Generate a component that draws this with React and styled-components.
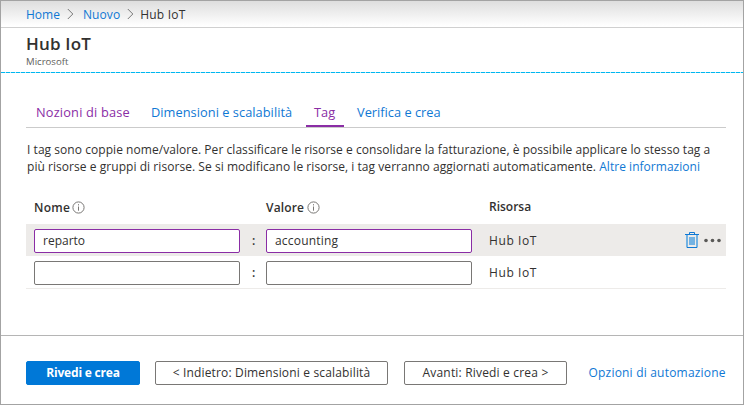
import React from 'react';
import styled, { createGlobalStyle, css } from 'styled-components';

const GlobalStyle = createGlobalStyle`
  *, *::before, *::after { box-sizing: border-box; }
  body { margin: 0; }
`;

const link = '#0f78d4';
const purple = '#8a2da5';
const ink = '#323130';

const Window = styled.div`
  display: flex;
  flex-direction: column;
  width: 744px;
  height: 405px;
  border: 1px solid #a3a3a3;
  background: #fff;
  color: ${ink};
  font: 400 12px/17px "Open Sans", "Noto Sans", sans-serif;
  white-space: nowrap;
`;

const Breadcrumb = styled.nav`
  display: flex;
  align-items: center;
  height: 27px;
  padding-left: 25px;
  border-bottom: 1px solid #d0d0d0;
  background: linear-gradient(#dedede, #fff 96%);
`;

const Crumb = styled.span`
  color: ${(p) => (p.$current ? ink : link)};
  letter-spacing: ${(p) => p.$track || 0}px;
`;

const Chevron = styled.svg`
  width: 7px;
  height: 12px;
  margin: 0 ${(p) => p.$after}px 0 7px;
  fill: none;
  stroke: #777;
  stroke-width: 1;
`;

const Header = styled.header`
  height: 44px;
  padding: 5px 0 0 25px;
`;

const DashLine = styled.div`
  height: 1px;
  background: linear-gradient(90deg, #00b7f0 0 4px, #b5eaf9 4px 5px) 0 0 / 5px 1px repeat-x;
`;

const Title = styled.h1`
  margin: 0;
  font-size: 17px;
  line-height: 22px;
  font-weight: 600;
  letter-spacing: 0.2px;
`;

const Publisher = styled.div`
  color: #605e5c;
  font-size: 9.6px;
  line-height: 14px;
`;

const Main = styled.main`
  height: 262px;
  padding: 27px 17px 0 25px;
`;

const Tabs = styled.div`
  display: flex;
  height: 28px;
  padding-left: 2px;
  border-bottom: 1px solid #cbcbcb;
`;

const Tab = styled.div`
  height: 27px;
  padding: 4px 0 0 8px;
  width: ${(p) => p.$width}px;
  margin-right: ${(p) => p.$gap}px;
  color: ${(p) => (p.$visited ? purple : link)};
  font-size: 12.8px;
  line-height: 17px;
  letter-spacing: ${(p) => p.$track || 0}px;
  ${(p) => p.$active && css`border-bottom: 2px solid ${purple};`}
`;

const Description = styled.p`
  margin: 13px 0 0 1px;
`;

const DescriptionLine = styled.span`
  display: block;
  letter-spacing: ${(p) => p.$track}px;
`;

const Link = styled.a`
  color: ${link};
  letter-spacing: 0.03px;
`;

const columns = css`
  display: grid;
  grid-template-columns: 206px 26px 206px 17px 1fr auto;
  padding-left: 8px;
`;

const TableHead = styled.div`
  ${columns}
  height: 49px;
  padding-top: 23px;
  font-weight: 600;
`;

const HeadCell = styled.div`
  display: flex;
  align-items: flex-start;
  grid-column: ${(p) => p.$column};
  padding-top: ${(p) => (p.$hinted ? 1 : 0)}px;
  letter-spacing: ${(p) => p.$track || 0}px;
`;

const InfoIcon = styled.svg`
  width: 13px;
  height: 13px;
  margin: 1.5px 0 0 ${(p) => p.$gap}px;
  fill: none;
  stroke: #797775;
`;

const TagRow = styled.div`
  ${columns}
  align-items: center;
  height: ${(p) => (p.$active ? 32 : 33)}px;
  background: ${(p) => (p.$active ? '#edebe9' : '#fff')};
  border-bottom: ${(p) => (p.$active ? '0' : '1px solid #edebe9')};
`;

const Field = styled.div`
  height: 24px;
  margin-top: 2px;
  padding-left: 8px;
  border: 1px solid ${(p) => (p.$filled ? purple : '#797775')};
  border-radius: 2px;
  background: #fff;
  line-height: 22px;
  letter-spacing: ${(p) => p.$track || 0}px;
`;

const Colon = styled.div`
  padding-left: 12px;
  font-weight: 600;
`;

const Resource = styled.div`
  grid-column: 5;
  letter-spacing: 0.6px;
`;

const Actions = styled.div`
  display: flex;
  align-items: center;
  gap: 5px;
  padding-right: 5px;
`;

const Trash = styled.svg`
  width: 14px;
  height: 17px;
`;

const More = styled.svg`
  width: 17px;
  height: 5px;
  fill: #5a5957;
`;

const Footer = styled.footer`
  display: flex;
  flex: 1;
  padding: 25px 0 0 25px;
  border-top: 1px solid #b5b5b5;
`;

const Button = styled.button`
  width: ${(p) => p.$width}px;
  height: 24px;
  margin-right: ${(p) => p.$gap}px;
  padding: 0;
  border: 1px solid #797775;
  border-radius: 2px;
  background: #fff;
  color: ${ink};
  font: 500 12px/22px "Open Sans", "Noto Sans", sans-serif;
  letter-spacing: ${(p) => p.$track || 0}px;
  white-space: nowrap;
  ${(p) => p.$primary && css`
    border-color: #0078d7;
    background: #0078d7;
    color: #fff;
    font-weight: 700;
  `}
`;

const FooterLink = styled.a`
  padding-top: 3px;
  color: ${link};
  letter-spacing: 0.2px;
`;

function Separator({ after }) {
  return (
    <Chevron $after={after} viewBox="0 0 7 12">
      <path d="M0.8 1 L5.8 6 L0.8 11" />
    </Chevron>
  );
}

function Info({ gap }) {
  return (
    <InfoIcon $gap={gap} viewBox="0 0 13 13">
      <circle cx="6.5" cy="6.5" r="5.6" />
      <path d="M6.5 5.5V9.7M6.5 3.2V4.4" />
    </InfoIcon>
  );
}

function TrashIcon() {
  return (
    <Trash viewBox="0 0 14 17">
      <path d="M2 3V15.5M12 3V15.5" stroke="#73b2e2" strokeWidth="2" />
      <rect x="4" y="5" width="6" height="8" fill="#73b2e2" />
      <path d="M0 2.5H14M2 15.5H12M4.5 2V0.5H9.5V2" fill="none" stroke="#0f78d4" />
    </Trash>
  );
}

export default function App() {
  return (
    <>
      <GlobalStyle />
      <Window>
        <Breadcrumb>
          <Crumb>Home</Crumb>
          <Separator after={9} />
          <Crumb $track={0.1}>Nuovo</Crumb>
          <Separator after={6} />
          <Crumb $current $track={0.2}>Hub IoT</Crumb>
        </Breadcrumb>
        <Header>
          <Title>Hub IoT</Title>
          <Publisher>Microsoft</Publisher>
        </Header>
        <DashLine />
        <Main>
          <Tabs>
            <Tab $visited $width={101} $gap={14} $track={0.17}>Nozioni di base</Tab>
            <Tab $width={148} $gap={15} $track={0.04}>Dimensioni e scalabilità</Tab>
            <Tab $visited $active $width={38} $gap={5}>Tag</Tab>
            <Tab $width={100}>Verifica e crea</Tab>
          </Tabs>
          <Description>
            <DescriptionLine $track={0.048}>
              I tag sono coppie nome/valore. Per classificare le risorse e consolidare la fatturazione, è possibile applicare lo stesso tag a
            </DescriptionLine>
            <DescriptionLine $track={0.05}>
              più risorse e gruppi di risorse. Se si modificano le risorse, i tag verranno aggiornati automaticamente.{' '}
              <Link>Altre informazioni</Link>
            </DescriptionLine>
          </Description>
          <TableHead>
            <HeadCell $hinted $column={1} $track={0.25}>Nome<Info gap={2} /></HeadCell>
            <HeadCell $hinted $column={3} $track={0.15}>Valore<Info gap={2.5} /></HeadCell>
            <HeadCell $column={5}>Risorsa</HeadCell>
          </TableHead>
          <TagRow $active>
            <Field $filled>reparto</Field>
            <Colon>:</Colon>
            <Field $filled $track={0.2}>accounting</Field>
            <Resource>Hub IoT</Resource>
            <Actions>
              <TrashIcon />
              <More viewBox="0 0 17 5">
                <circle cx="2" cy="2.5" r="1.8" />
                <circle cx="8.5" cy="2.5" r="1.8" />
                <circle cx="15" cy="2.5" r="1.8" />
              </More>
            </Actions>
          </TagRow>
          <TagRow>
            <Field />
            <Colon>:</Colon>
            <Field />
            <Resource>Hub IoT</Resource>
          </TagRow>
        </Main>
        <Footer>
          <Button $primary $width={114} $gap={15} $track={-0.2}>Rivedi e crea</Button>
          <Button $width={233} $gap={16} $track={0.16}>&lt; Indietro: Dimensioni e scalabilità</Button>
          <Button $width={163} $gap={21.5} $track={0.18}>Avanti: Rivedi e crea &gt;</Button>
          <FooterLink>Opzioni di automazione</FooterLink>
        </Footer>
      </Window>
    </>
  );
}
